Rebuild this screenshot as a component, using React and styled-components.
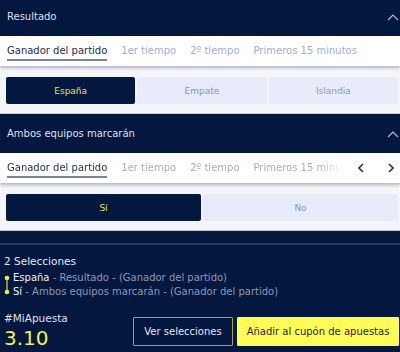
import React from 'react';
import styled, { createGlobalStyle } from 'styled-components';

const GlobalStyle = createGlobalStyle`
    html, body {
        margin: 0;
        background: #03173f;
        font-family: "DejaVu Sans", Verdana, sans-serif;
        overflow: hidden;
    }
`

const Page = styled.div`
    width: 400px;
    height: 352px;
    overflow: hidden;
`

const Scroller = styled.div`
    margin-top: -3px;
`

const SectionHeader = styled.div`
    height: 39px;
    padding: 0 1px 0 7px;
    display: flex;
    align-items: center;
    justify-content: space-between;
    color: #dde1ec;
    font-size: 10px;
    background: #03173f;
`

const TabBar = styled.div`
    height: 30px;
    display: flex;
    background: #ffffff;
    box-shadow: 0 2px 3px rgba(20, 30, 60, 0.3);
    position: relative;
    z-index: 1;
`

const TabList = styled.div`
    flex: 1;
    min-width: 0;
    display: flex;
    gap: 14px;
    padding-left: 7px;
    overflow: hidden;
    white-space: nowrap;
    mask-image: ${p => p.$fade ? 'linear-gradient(to right, #000 calc(100% - 22px), transparent)' : 'none'};
`

const Tab = styled.div`
    flex: none;
    font-size: 10px;
    line-height: 12px;
    padding: 9px 0 2px;
    height: 12px;
    color: ${p => p.$active ? '#1e2949' : '#a4acc9'};
    border-bottom: 2px solid ${p => p.$active ? '#7a829e' : 'transparent'};
`

const TabNav = styled.div`
    flex: none;
    display: flex;
    align-items: center;
    gap: 24px;
    padding: 0 6px 0 16px;
`

const OptionArea = styled.div`
    display: grid;
    grid-template-columns: repeat(${p => p.$count}, 1fr);
    gap: 2px;
    padding: 11px 2px 9px 6px;
    background: #f4f5f8;
    border-bottom: 1px solid #c6cad6;
`

const Option = styled.div`
    height: 27px;
    border-radius: 2px;
    display: flex;
    align-items: center;
    justify-content: center;
    font-size: 9px;
    background: ${p => p.$active ? '#03173f' : '#e8ecfa'};
    color: ${p => p.$active ? '#e6e63c' : '#8d95ad'};
`

const Gap = styled.div`
    height: 12px;
`

const Footer = styled.div`
    border-top: 2px solid #2c3b62;
    padding: 10px 1px 0 4px;
    background: #03173f;
`

const Title = styled.div`
    font-size: 10.5px;
    line-height: 13px;
    color: #e4e7f0;
`

const Selections = styled.div`
    display: flex;
    margin-top: 3px;
`

const Lines = styled.div`
    display: flex;
    flex-direction: column;
`

const Line = styled.div`
    font-size: 10px;
    line-height: 14px;
    color: #8f98b6;
    white-space: nowrap;
`

const Pick = styled.span`
    color: #eef0f6;
`

const BottomRow = styled.div`
    display: flex;
    align-items: center;
    justify-content: space-between;
    margin-top: 12px;
`

const Stake = styled.div`
    display: flex;
    flex-direction: column;
`

const StakeLabel = styled.div`
    font-size: 10.5px;
    line-height: 14px;
    color: #dfe3ee;
`

const Odds = styled.div`
    font-size: 20px;
    line-height: 26px;
    color: #f2f244;
`

const Actions = styled.div`
    display: flex;
    gap: 4px;
`

const ActionButton = styled.button`
    height: 29px;
    padding: 0;
    width: ${p => p.$width}px;
    font-family: inherit;
    font-size: 10px;
    border-radius: 1px;
    border: 1px solid ${p => p.$primary ? '#fdfd55' : '#a4a44c'};
    background: ${p => p.$primary ? '#fdfd55' : '#03173f'};
    color: ${p => p.$primary ? '#1b2440' : '#e3e6ef'};
`

const ChevronUp = () => (
    <svg width="12" height="8" viewBox="0 0 12 8">
        <polyline points="1,7 6,2 11,7" fill="none" stroke="#b3b9cd" strokeWidth="1.2" />
    </svg>
)

const Arrow = ({ dir }) => (
    <svg width="6" height="10" viewBox="0 0 6 10">
        <polyline
            points={dir === 'left' ? '5,1 1,5 5,9' : '1,1 5,5 1,9'}
            fill="none"
            stroke="#27335a"
            strokeWidth="1.6"
        />
    </svg>
)

const Connector = () => (
    <svg width="9" height="28" viewBox="0 0 9 28">
        <line x1="3" y1="7" x2="3" y2="21" stroke="#b0b046" strokeWidth="1.5" />
        <circle cx="3" cy="7" r="2.3" fill="#eeee40" />
        <circle cx="3" cy="21" r="2.3" fill="#eeee40" />
    </svg>
)

const tabs = ['Ganador del partido', '1er tiempo', '2º tiempo', 'Primeros 15 minutos']

const Market = ({ title, options, nav }) => (
    <div>
        <SectionHeader>
            {title}
            <ChevronUp />
        </SectionHeader>
        <TabBar>
            <TabList $fade={nav}>
                {tabs.map((t, i) => <Tab key={t} $active={i === 0}>{t}</Tab>)}
            </TabList>
            {nav && (
                <TabNav>
                    <Arrow dir="left" />
                    <Arrow dir="right" />
                </TabNav>
            )}
        </TabBar>
        <OptionArea $count={options.length}>
            {options.map((o, i) => <Option key={o} $active={i === 0}>{o}</Option>)}
        </OptionArea>
    </div>
)

export default function App() {
    return (
        <Page>
            <GlobalStyle />
            <Scroller>
                <Market title="Resultado" options={['España', 'Empate', 'Islandia']} />
                <Market title="Ambos equipos marcarán" options={['Sí', 'No']} nav />
                <Gap />
                <Footer>
                    <Title>2 Selecciones</Title>
                    <Selections>
                        <Connector />
                        <Lines>
                            <Line><Pick>España</Pick> - Resultado - (Ganador del partido)</Line>
                            <Line><Pick>Sí</Pick> - Ambos equipos marcarán - (Ganador del partido)</Line>
                        </Lines>
                    </Selections>
                    <BottomRow>
                        <Stake>
                            <StakeLabel>#MiApuesta</StakeLabel>
                            <Odds>3.10</Odds>
                        </Stake>
                        <Actions>
                            <ActionButton $width={100}>Ver selecciones</ActionButton>
                            <ActionButton $width={162} $primary>Añadir al cupón de apuestas</ActionButton>
                        </Actions>
                    </BottomRow>
                </Footer>
            </Scroller>
        </Page>
    )
}
